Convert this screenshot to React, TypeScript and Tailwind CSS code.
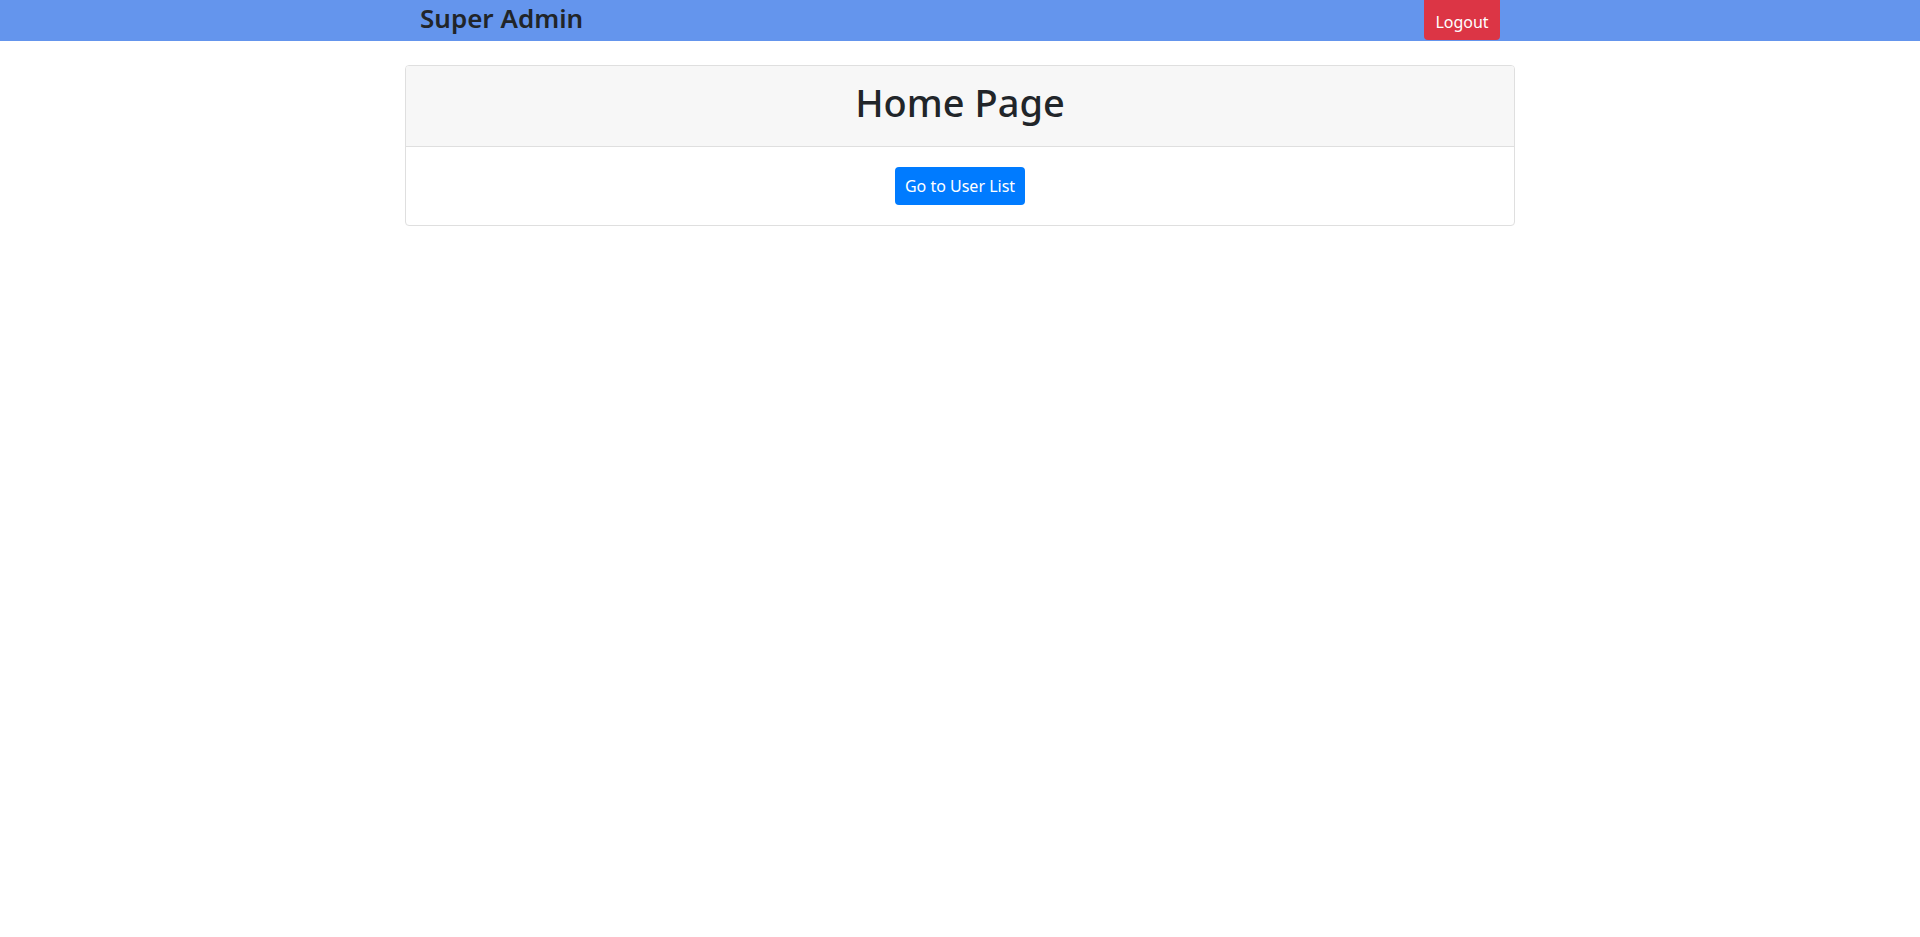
export default function App() {
  const font = { fontFamily: '"Segoe UI", "Noto Sans", "Open Sans", sans-serif' };
  return (
    <div className="min-h-[937px] bg-white text-[#212529]" style={font}>
      <nav className="h-[41px] bg-[#6495ed] overflow-hidden">
        <div className="w-[1140px] mx-auto px-[30px] flex justify-between items-start h-full">
          <span className="text-[26px] leading-[36px] font-semibold text-[#212529]">Super Admin</span>
          <button className="h-[40px] w-[76px] bg-[#dc3545] text-white text-[16px] rounded-b-[4px] leading-[40px] pt-[2px]">
            Logout
          </button>
        </div>
      </nav>
      <div className="w-[1140px] mx-auto px-[15px] pt-[24px]">
        <div className="border border-[#dfdfdf] rounded-[4px] overflow-hidden">
          <div className="bg-[#f7f7f7] border-b border-[#dfdfdf] px-[20px] pt-[12px] pb-[20px] text-center">
            <h1 className="text-[38px] leading-[48px] font-medium">Home Page</h1>
          </div>
          <div className="p-[20px] flex justify-center">
            <button className="h-[38px] w-[130px] bg-[#007bff] text-white text-[16px] rounded-[4px]">
              Go to User List
            </button>
          </div>
        </div>
      </div>
    </div>
  );
}
